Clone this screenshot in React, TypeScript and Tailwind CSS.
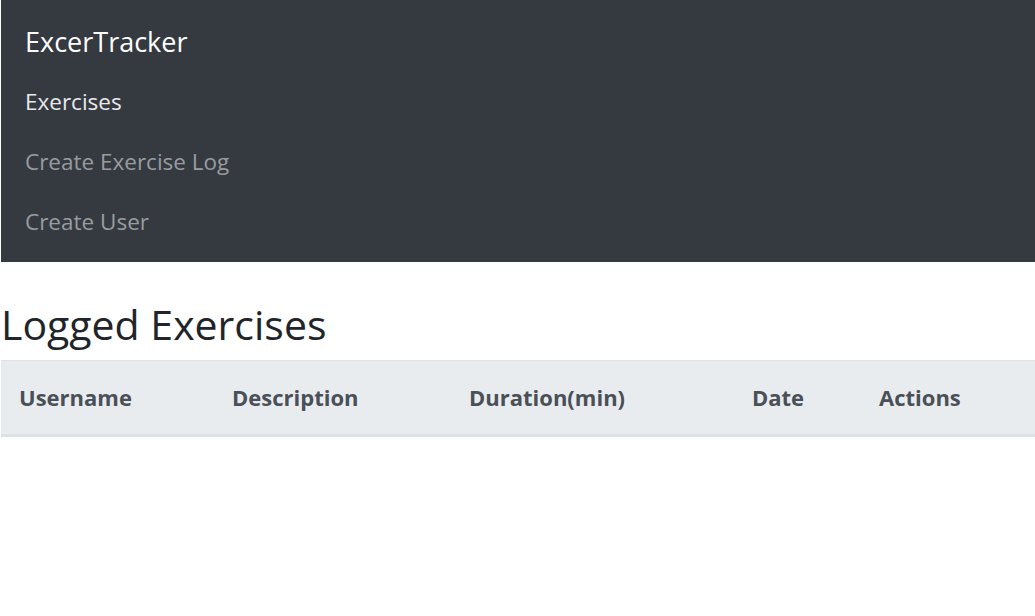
export default function App() {
  const font = { fontFamily: '"Open Sans", "Noto Sans", sans-serif' };
  return (
    <div className="min-h-[616px] bg-white pl-px" style={font}>
      <nav className="bg-[#343a40] h-[262px] px-6 pt-3">
        <div className="text-[27px] leading-[45px] pt-[7px] pb-2 text-white">ExcerTracker</div>
        <ul className="flex flex-col">
          <li className="h-[60px] flex items-center text-[22.5px] pb-px text-[#e8e9ea]">Exercises</li>
          <li className="h-[60px] flex items-center text-[22.5px] pb-px text-[#999c9f]">Create Exercise Log</li>
          <li className="h-[60px] flex items-center text-[22.5px] pb-px text-[#999c9f]">Create User</li>
        </ul>
      </nav>
      <h3 className="text-[41px] font-medium leading-[50px] text-[#212529] mt-[37px] mb-[11px]">Logged Exercises</h3>
      <table className="w-[1034px] border-collapse">
        <thead>
          <tr className="bg-[#e9ecef] text-[#495057] text-[22px] font-bold text-left">
            <th className="w-[213px] px-[18px] h-[75px] border-t border-b-[3px] border-[#dee2e6]">Username</th>
            <th className="w-[237px] px-[18px] border-t border-b-[3px] border-[#dee2e6]">Description</th>
            <th className="w-[283px] px-[18px] border-t border-b-[3px] border-[#dee2e6]">Duration(min)</th>
            <th className="w-[127px] px-[18px] border-t border-b-[3px] border-[#dee2e6]">Date</th>
            <th className="px-[18px] border-t border-b-[3px] border-[#dee2e6]">Actions</th>
          </tr>
        </thead>
        <tbody></tbody>
      </table>
    </div>
  );
}
